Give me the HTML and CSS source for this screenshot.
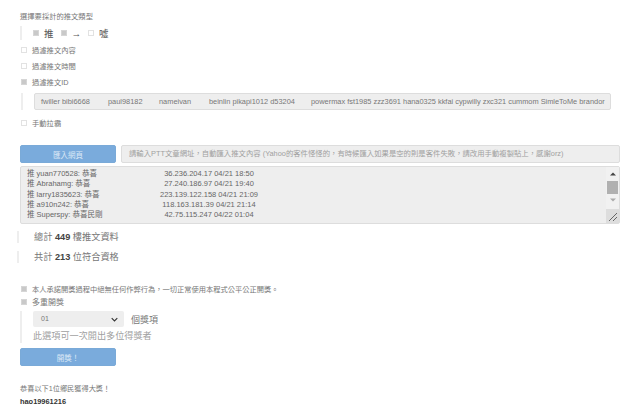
FILE: index.html
```html
<!DOCTYPE html>
<html lang="zh-Hant">
<head>
<meta charset="utf-8">
<title>抽獎</title>
<link rel="stylesheet" href="styles.css">
</head>
<body>
<main class="page">
  <div class="title">選擇要採計的推文類型</div>
  <div class="types quote">
    <label class="type"><span class="box on"></span>推</label>
    <label class="type"><span class="box on"></span>→</label>
    <label class="type"><span class="box"></span>噓</label>
  </div>
  <label class="opt"><span class="box"></span>過濾推文內容</label>
  <label class="opt"><span class="box"></span>過濾推文時間</label>
  <label class="opt"><span class="box on"></span>過濾推文ID</label>
  <div class="quote idrow">
    <div class="field ids"><span class="id-a">fwiller bibi6668</span><span class="id-b">paul98182</span><span class="id-c">nameivan</span><span class="id-d">beinlin pikapi1012 d53204</span><span class="id-e">powermax fst1985 zzz3691 hana0325 kkfai cypwilly zxc321 cummom SimleToMe brandor</span></div>
  </div>
  <label class="opt"><span class="box"></span>手動拉霸</label>
  <div class="import">
    <button class="btn">匯入網頁</button>
    <div class="field url">請輸入PTT文章網址，自動匯入推文內容 (Yahoo的客件怪怪的，有時候匯入如果是空的則是客件失敗，請改用手動複製貼上，感謝orz)</div>
  </div>
  <div class="list">
    <div class="lines">
      <div class="line"><span class="who">推 yuan770528: 恭喜</span><span class="ip">36.236.204.17 04/21 18:50</span></div>
      <div class="line"><span class="who">推 Abrahamg: 恭喜</span><span class="ip">27.240.186.97 04/21 19:40</span></div>
      <div class="line"><span class="who">推 larry1835623: 恭喜</span><span class="ip">223.139.122.158 04/21 21:09</span></div>
      <div class="line"><span class="who">推 a910n242: 恭喜</span><span class="ip">118.163.181.39 04/21 21:14</span></div>
      <div class="line"><span class="who">推 Superspy: 恭喜民剛</span><span class="ip">42.75.115.247 04/22 01:04</span></div>
    </div>
    <div class="scroll">
      <svg class="arrow" viewBox="0 0 8 5" aria-hidden="true"><path d="M4 0.5 8 4.5H0Z"/></svg>
      <span class="thumb"></span>
      <svg class="arrow dim" viewBox="0 0 8 5" aria-hidden="true"><path d="M0 0.5H8L4 4.5Z"/></svg>
      <svg class="grip" viewBox="0 0 13 14" aria-hidden="true"><path d="M3 12 11 4M7 12 11 8"/></svg>
    </div>
  </div>
  <div class="stat quote">總計 <b>449</b> 樓推文資料</div>
  <div class="stat quote second">共計 <b>213</b> 位符合資格</div>
  <label class="opt promise"><span class="box on"></span>本人承諾開獎過程中絕無任何作弊行為，一切正常使用本程式公平公正開獎。</label>
  <label class="opt multi"><span class="box on"></span>多重開獎</label>
  <div class="quote multi-body">
    <div class="pick">
      <div class="select">01<svg class="chev" viewBox="0 0 10 6" aria-hidden="true"><path d="M1 1 5 5 9 1"/></svg></div>
      <span class="unit">個獎項</span>
    </div>
    <div class="hint">此選項可一次開出多位得獎者</div>
  </div>
  <button class="btn draw">開獎！</button>
  <div class="result">恭喜以下1位鄉民獲得大獎！</div>
  <div class="winner">hao19961216</div>
</main>
</body>
</html>
```
FILE: styles.css
```css
* { box-sizing: border-box; }
html, body { margin: 0; background: #fff; }
body {
  width: 640px;
  height: 416px;
  overflow: hidden;
  font-family: "Liberation Sans", "Noto Sans CJK TC", sans-serif;
  color: #666;
  font-size: 7.3px;
}
.page { padding: 10px 20px 0; display: flex; flex-direction: column; }
.title { height: 13px; line-height: 13px; color: #777; }
.quote { border-left: 2px solid #eee; }
.types {
  margin-top: 3px;
  height: 14px;
  padding-left: 11px;
  display: flex;
  align-items: center;
  gap: 7px;
  font-size: 9.5px;
}
.type { display: flex; align-items: center; gap: 5px; color: #555; }
.box {
  width: 6px;
  height: 6px;
  border: 1px solid #e2e2e2;
  background: #fff;
  flex: none;
}
.box.on { background: #c9c9c9; border-color: #d6d6d6; }
.opt {
  display: flex;
  align-items: center;
  gap: 5px;
  height: 16px;
  margin-left: 1px;
  color: #777;
  font-size: 7.3px;
}
.types + .opt { margin-top: 2px; }
.idrow { margin-top: 3px; padding-left: 11px; margin-left: 1px; }
.field {
  height: 17px;
  line-height: 15px;
  background: #eee;
  border: 1px solid #ddd;
  border-radius: 2px;
  white-space: nowrap;
  overflow: hidden;
}
.ids { width: 577px; padding-left: 6px; color: #777; font-size: 7.4px; display: flex; }
.id-a { width: 67px; }
.id-b { width: 51px; }
.id-c { width: 50px; }
.id-d { width: 102px; }
.idrow + .opt { margin-top: 5px; }
.import { display: flex; gap: 5px; margin-top: 14px; }
.btn {
  width: 96px;
  height: 18px;
  padding: 0;
  border: 1px solid #7aaad8;
  border-radius: 2px;
  background: #7aabdc;
  color: #dbe8f6;
  font: inherit;
  font-size: 7.5px;
  flex: none;
}
.url { flex: 1; height: 18px; line-height: 16px; padding-left: 7px; color: #a0a0a0; font-size: 7.37px; }
.list {
  margin-top: 3px;
  height: 58px;
  background: #eee;
  border: 1px solid #ddd;
  border-radius: 2px;
  display: flex;
  justify-content: space-between;
}
.lines { padding: 2px 0 0 6px; color: #666; font-size: 7.5px; line-height: 10.3px; }
.line { display: flex; }
.who { width: 125px; white-space: nowrap; }
.ip { width: 114px; text-align: center; white-space: nowrap; }
.scroll {
  width: 13px;
  background: #f1f1f1;
  display: flex;
  flex-direction: column;
  align-items: center;
  position: relative;
}
.arrow { width: 6px; height: 4px; margin-top: 5px; fill: #444; }
.arrow.dim { fill: #aaa; margin-top: 4px; }
.thumb { width: 11px; height: 13px; margin-top: 5px; background: #b0b0b0; }
.grip {
  position: absolute;
  right: 0;
  bottom: 0;
  width: 13px;
  height: 14px;
  background: #ddd;
  fill: none;
  stroke: #666;
  stroke-width: 1;
}
.stat {
  margin-top: 7px;
  height: 12px;
  line-height: 12px;
  margin-left: -3px;
  padding-left: 15px;
  font-size: 9.2px;
  color: #777;
}
.stat b { color: #444; }
.stat.second { margin-top: 8px; }
.promise { margin-top: 19px; height: 13px; font-size: 7.26px; }
.multi { height: 13px; font-size: 8px; }
.multi-body { margin-top: 3px; height: 32px; padding-left: 11px; }
.pick { display: flex; align-items: center; gap: 7px; height: 16px; }
.select {
  width: 91px;
  height: 16px;
  line-height: 16px;
  padding: 0 8px;
  background: #eee;
  border-radius: 2px;
  color: #777;
  font-size: 7px;
  display: flex;
  align-items: center;
  justify-content: space-between;
}
.chev { width: 7px; height: 5px; fill: none; stroke: #333; stroke-width: 1.6; margin-right: -2px; }
.unit { font-size: 9px; color: #777; }
.hint { margin-top: 3px; font-size: 9.15px; line-height: 13px; color: #a0a0a0; }
.draw { margin-top: 5px; }
.result { margin-top: 16px; height: 13px; line-height: 13px; color: #777; font-size: 7.2px; }
.winner { height: 13px; line-height: 13px; color: #333; font-weight: bold; font-size: 7.4px; }
```
